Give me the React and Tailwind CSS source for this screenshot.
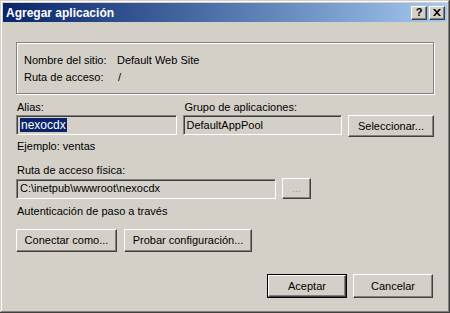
const raised =
  "border border-t-white border-l-white border-r-[#404040] border-b-[#404040] shadow-[inset_-1px_-1px_#808080]";
const sunken =
  "border border-t-[#808080] border-l-[#808080] border-r-white border-b-white shadow-[inset_1px_1px_#404040,inset_-1px_-1px_#d4d0c8]";

function Btn({ children, className = "", disabled = false }) {
  return (
    <div
      className={`${raised} bg-[#d4d0c8] flex items-center justify-center ${
        disabled ? "text-[#808080]" : "text-black"
      } ${className}`}
    >
      {children}
    </div>
  );
}

function Field({ children, className = "" }) {
  return (
    <div className={`${sunken} bg-[#d4d0c8] h-[20px] flex items-center px-[3px] ${className}`}>
      {children}
    </div>
  );
}

export default function App() {
  return (
    <div
      className="w-[450px] h-[313px] bg-[#d4d0c8] text-[11px] text-black p-[3px] flex flex-col shadow-[inset_-1px_-1px_#404040,inset_1px_1px_#d4d0c8,inset_-2px_-2px_#808080,inset_2px_2px_#ffffff]"
      style={{ fontFamily: '"Liberation Sans", Arial, sans-serif' }}
    >
      {/* title bar */}
      <div className="h-[19px] bg-gradient-to-r from-[#0a246a] to-[#a6caf0] flex items-center justify-between pl-[3px] pr-[2px]">
        <span className="text-white font-bold text-[12px]">Agregar aplicación</span>
        <div className="flex gap-[2px]">
          <Btn className="w-[16px] h-[14px] font-bold text-[11px]">?</Btn>
          <Btn className="w-[16px] h-[14px]">
            <svg width="8" height="7" viewBox="0 0 8 7">
              <path d="M0 0h2l2 2.3L6 0h2L5 3.5 8 7H6L4 4.7 2 7H0l3-3.5z" fill="#000" />
            </svg>
          </Btn>
        </div>
      </div>

      <div className="flex flex-col pl-[13px] pr-[13px]">
        {/* site info group */}
        <div className="mt-[20px] h-[52px] border border-[#808080] shadow-[inset_1px_1px_#ffffff,1px_1px_#ffffff] pl-[7px] pt-[9px] flex flex-col">
          <div className="flex h-[17px] items-center">
            <span className="w-[93px]">Nombre del sitio:</span>
            <span>Default Web Site</span>
          </div>
          <div className="flex h-[17px] items-center">
            <span className="w-[93px]">Ruta de acceso:</span>
            <span className="pl-[1px]">/</span>
          </div>
        </div>

        {/* alias / pool */}
        <div className="mt-[6px] flex">
          <div className="w-[161px] flex flex-col">
            <span className="h-[15px] pl-[1px] flex items-center">Alias:</span>
            <Field>
              <span className="bg-[#0a246a] text-white text-[12px] leading-[14px] px-[1px]">nexocdx</span>
            </Field>
          </div>
          <div className="w-[160px] ml-[6px] flex flex-col">
            <span className="h-[15px] pl-[2px] flex items-center">Grupo de aplicaciones:</span>
            <Field>DefaultAppPool</Field>
          </div>
          <div className="flex flex-col justify-end ml-[6px]">
            <Btn className="w-[86px] h-[22px] -mb-[2px]">Seleccionar...</Btn>
          </div>
        </div>

        <span className="mt-[3px] h-[16px] pl-[1px] flex items-center">Ejemplo: ventas</span>
        <span className="mt-[8px] h-[16px] pl-[1px] flex items-center">Ruta de acceso física:</span>
        <div className="flex items-center">
          <Field className="w-[260px]">C:\inetpub\wwwroot\nexocdx</Field>
          <Btn disabled className="ml-[6px] w-[29px] h-[21px] text-[#a0a0a0]">...</Btn>
        </div>
        <span className="mt-[4px] h-[16px] pl-[1px] flex items-center">Autenticación de paso a través</span>

        <div className="mt-[10px] flex gap-[7px]">
          <Btn className="w-[101px] h-[23px]">Conectar como...</Btn>
          <Btn className="w-[128px] h-[23px]">Probar configuración...</Btn>
        </div>

        <div className="mt-[22px] flex justify-end gap-[6px] pr-[1px]">
          <div className="border border-black">
            <Btn className="w-[78px] h-[22px]">Aceptar</Btn>
          </div>
          <Btn className="w-[80px] h-[24px]">Cancelar</Btn>
        </div>
      </div>
    </div>
  );
}
